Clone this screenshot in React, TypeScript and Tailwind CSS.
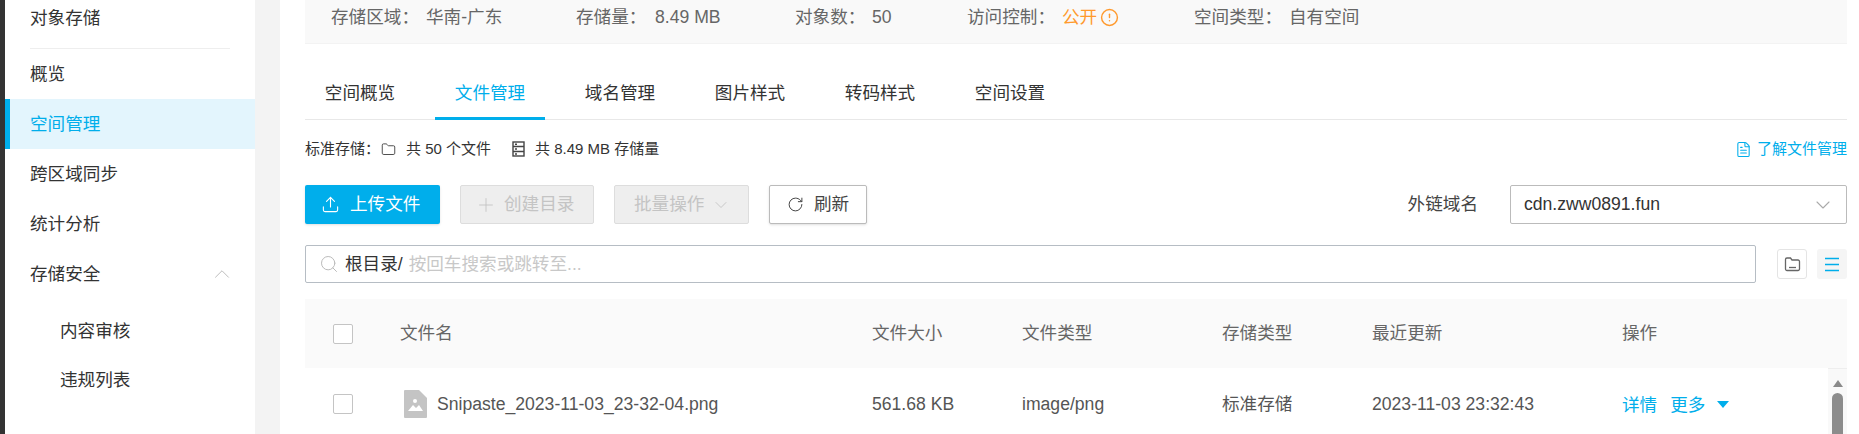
import React from 'react';
import { ChevronDown, ChevronUp, CircleAlert, FileText, Folder, Plus, RotateCw, Search, Upload } from 'lucide-react';

const font = 'font-["Liberation_Sans","Noto_Sans_CJK_SC",sans-serif]';

function NavItem({ label, active }: { label: string; active?: boolean }) {
  return (
    <div
      className={`flex h-[50px] items-center text-[17.6px] ${
        active ? 'border-l-[5px] border-[#00aeeb] bg-[#e3f5fd] pl-[20px] text-[#00aeeb]' : 'pl-[25px] text-[#333]'
      }`}
    >
      {label}
    </div>
  );
}

function Sidebar() {
  return (
    <aside className="h-full w-[250px] shrink-0 bg-white">
      <div className="flex h-[36px] items-center pl-[25px] text-[17.6px] text-[#333]">对象存储</div>
      <div className="mt-[12px] mr-[25px] ml-[25px] h-px bg-[#eee]" />
      <NavItem label="概览" />
      <NavItem label="空间管理" active />
      <NavItem label="跨区域同步" />
      <NavItem label="统计分析" />
      <div className="flex h-[50px] items-center justify-between pr-[20px] pl-[25px] text-[17.6px] text-[#333]">
        存储安全
        <ChevronUp size={26} strokeWidth={0.9} className="text-[#bbb]" />
      </div>
      <div className="pt-[8px]">
        <div className="flex h-[49px] items-center pl-[55px] text-[17.6px] text-[#333]">内容审核</div>
        <div className="flex h-[49px] items-center pl-[55px] text-[17.6px] text-[#333]">违规列表</div>
      </div>
    </aside>
  );
}

function Summary() {
  return (
    <div className="flex h-[44px] items-start border-b border-[#f3f3f3] bg-[#f9f9f9] pt-[4px] pl-[26px] text-[17.6px] leading-[26px] text-[#666]">
      <div className="flex w-[245px] items-center">
        <span className="w-[95px]">存储区域：</span>华南-广东
      </div>
      <div className="flex w-[219px] items-center">
        <span className="w-[79px]">存储量：</span>8.49 MB
      </div>
      <div className="flex w-[172px] items-center">
        <span className="w-[77px]">对象数：</span>50
      </div>
      <div className="flex w-[227px] items-center">
        <span className="w-[95px]">访问控制：</span>
        <span className="text-[#ff9a2e]">公开</span>
        <CircleAlert size={19} strokeWidth={1.8} className="ml-[3px] text-[#ff9a2e]" />
      </div>
      <div className="flex w-[260px] items-center">
        <span className="w-[95px]">空间类型：</span>自有空间
      </div>
    </div>
  );
}

function Tabs() {
  const tabs = ['空间概览', '文件管理', '域名管理', '图片样式', '转码样式', '空间设置'];
  return (
    <div className="mt-[29px] flex h-[47px] gap-[20px] border-b border-[#e8e8e8]">
      {tabs.map((t) => (
        <div
          key={t}
          className={`flex h-[47px] w-[110px] items-center justify-center text-[17.6px] ${
            t === '文件管理' ? 'border-b-[3px] border-[#00aeeb] pb-[4px] text-[#00aeeb]' : 'pb-[7px] text-[#333]'
          }`}
        >
          {t}
        </div>
      ))}
    </div>
  );
}

function Stats() {
  return (
    <div className="mt-[16px] flex h-[26px] items-center text-[15px] text-[#333]">
      <span className="w-[76px]">标准存储：</span>
      <Folder size={15} strokeWidth={1.5} className="text-[#444]" />
      <span className="ml-[10px] w-[106px]">共 50 个文件</span>
      <svg width="13" height="16" viewBox="0 0 13 16" fill="none" stroke="#444" strokeWidth="1.4">
        <rect x="1" y="1" width="11" height="14" />
        <path d="M1 5.5h11M1 10.5h11M3 3.2h2M3 8h2M3 13h2" />
      </svg>
      <span className="ml-[10px]">共 8.49 MB 存储量</span>
      <div className="ml-auto flex items-center gap-[5px] text-[#00aeeb]">
        <FileText size={17} strokeWidth={1.5} />
        了解文件管理
      </div>
    </div>
  );
}

function Toolbar() {
  return (
    <div className="mt-[23px] flex h-[39px] items-stretch text-[17.6px]">
      <button className="flex w-[135px] items-center rounded-[2px] bg-[#00aeeb] pl-[16px] text-white shadow-sm">
        <Upload size={19} strokeWidth={1.4} />
        <span className="ml-[10px]">上传文件</span>
      </button>
      <button className="ml-[20px] flex w-[134px] items-center rounded-[2px] border border-[#ddd] bg-[#eee] pl-[14px] text-[#c4c4c4]">
        <Plus size={22} strokeWidth={1} />
        <span className="ml-[7px]">创建目录</span>
      </button>
      <button className="ml-[20px] flex w-[135px] items-center rounded-[2px] border border-[#ddd] bg-[#eee] pl-[19px] text-[#c4c4c4]">
        批量操作
        <ChevronDown size={20} strokeWidth={1.1} className="ml-[7px]" />
      </button>
      <button className="ml-[20px] flex w-[98px] items-center rounded-[2px] border border-[#bbb] bg-white pl-[17px] text-[#444] shadow-sm">
        <RotateCw size={17} strokeWidth={1.4} />
        <span className="ml-[10px]">刷新</span>
      </button>
      <div className="ml-auto flex items-center text-[#444]">外链域名</div>
      <div className="ml-[32px] flex w-[337px] items-center justify-between rounded-[2px] border border-[#bbb] pr-[11px] pl-[13px] text-[#333]">
        <span>cdn.zww0891.fun</span>
        <ChevronDown size={24} strokeWidth={1.1} className="text-[#aaa]" />
      </div>
    </div>
  );
}

function SearchRow() {
  return (
    <div className="mt-[21px] flex h-[38px] items-center">
      <div className="flex h-[38px] w-[1451px] items-center rounded-[2px] border border-[#b6bdc4] pl-[13px] text-[17.6px]">
        <Search size={20} strokeWidth={1.2} className="text-[#bbb]" />
        <span className="ml-[6px] text-[#333]">根目录/</span>
        <span className="ml-[6px] text-[#c8c8c8]">按回车搜索或跳转至...</span>
      </div>
      <div className="ml-[21px] flex h-[30px] w-[30px] items-center justify-center rounded-[3px] border border-[#e4e4e4] bg-white">
        <svg width="17" height="16" viewBox="0 0 17 16" fill="none" stroke="#666" strokeWidth="1.3">
          <path d="M1.5 13V3.5A1.5 1.5 0 0 1 3 2h3.5L8 4h6a1.5 1.5 0 0 1 1.5 1.5V13a1.5 1.5 0 0 1-1.5 1.5H3A1.5 1.5 0 0 1 1.5 13Z" />
          <path d="M5 11.5h7" />
        </svg>
      </div>
      <div className="ml-[10px] flex h-[30px] w-[30px] items-center justify-center rounded-[3px] bg-[#f5f5f5]">
        <svg width="16" height="15" viewBox="0 0 16 15" stroke="#00aeeb" strokeWidth="1.3">
          <path d="M1 1.5h14M1 7.5h14M1 13.5h14" />
        </svg>
      </div>
    </div>
  );
}

function Checkbox() {
  return <div className="h-[20px] w-[20px] rounded-[2px] border border-[#c4c4c4] bg-white" />;
}

const columns = 'grid grid-cols-[95px_472px_150px_200px_150px_250px_1fr] items-center text-[17.6px]';

function FileTable() {
  return (
    <div className="mt-[16px]">
      <div className={`${columns} h-[69px] bg-[#fafafa] text-[#666]`}>
        <div className="pl-[28px]">
          <Checkbox />
        </div>
        <div>文件名</div>
        <div>文件大小</div>
        <div>文件类型</div>
        <div>存储类型</div>
        <div>最近更新</div>
        <div>操作</div>
      </div>
      <div className="flex">
        <div className={`${columns} h-[72px] flex-1 text-[#555]`}>
          <div className="pl-[28px]">
            <Checkbox />
          </div>
          <div className="flex items-center pl-[4px]">
            <svg width="23" height="28" viewBox="0 0 23 28" className="shrink-0">
              <path d="M1 0h14l8 8v19a1 1 0 0 1-1 1H1a1 1 0 0 1-1-1V1a1 1 0 0 1 1-1Z" fill="#c4c4c4" />
              <circle cx="11" cy="11" r="2" fill="#fff" />
              <path d="M4 21l5-6 3 3 3-3 4 6Z" fill="#fff" />
            </svg>
            <span className="ml-[10px]">Snipaste_2023-11-03_23-32-04.png</span>
          </div>
          <div>561.68 KB</div>
          <div>image/png</div>
          <div>标准存储</div>
          <div>2023-11-03 23:32:43</div>
          <div className="flex items-center pt-[2px] text-[#00aeeb]">
            详情
            <span className="ml-[13px]">更多</span>
            <span className="ml-[12px] h-0 w-0 border-x-[6px] border-t-[7px] border-x-transparent border-t-[#00aeeb]" />
          </div>
        </div>
        <div className="flex h-[72px] w-[19px] shrink-0 flex-col items-center border-t border-[#eee] bg-[#f9f9f9]">
          <span className="mt-[11px] h-0 w-0 border-x-[5px] border-b-[7px] border-x-transparent border-b-[#8a8a8a]" />
          <span className="mt-[6px] w-[11px] flex-1 rounded-t-[6px] bg-[#8c8c8c]" />
        </div>
      </div>
    </div>
  );
}

export default function App() {
  return (
    <div className={`flex h-[434px] overflow-hidden bg-white ${font}`}>
      <div className="w-[5px] shrink-0 bg-[#333]" />
      <Sidebar />
      <div className="w-[25px] shrink-0 bg-[#f3f3f3]" />
      <main className="min-w-0 flex-1 pr-[12px] pl-[25px]">
        <Summary />
        <Tabs />
        <Stats />
        <Toolbar />
        <SearchRow />
        <FileTable />
      </main>
    </div>
  );
}
